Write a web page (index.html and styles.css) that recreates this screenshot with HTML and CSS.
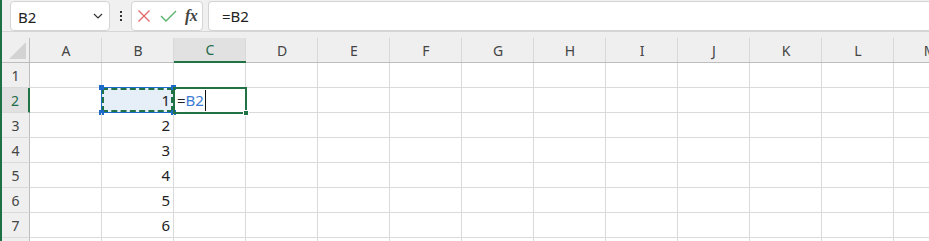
FILE: index.html
```html
<!DOCTYPE html>
<html lang="ja">
<head>
    <meta charset="UTF-8">
    <title>Book1 - Excel</title>
    <link rel="stylesheet" href="styles.css">
</head>
<body>
    <div class="app">
        <div class="toolbar">
            <div class="name-box">
                <span>B2</span>
                <svg class="chevron" width="10" height="6" viewBox="0 0 10 6"><path d="M1 1l4 4 4-4" fill="none" stroke="#333" stroke-width="1.2"/></svg>
            </div>
            <div class="dots"><i></i><i></i><i></i></div>
            <div class="fx-box">
                <svg width="14" height="14" viewBox="0 0 14 14"><path d="M1.5 1.5l11 11M12.5 1.5l-11 11" stroke="#e36b6b" stroke-width="1.4" fill="none"/></svg>
                <svg width="17" height="12" viewBox="0 0 17 12"><path d="M1 6l5 5 10-10" stroke="#5bb36a" stroke-width="1.4" fill="none"/></svg>
                <span class="fx">fx</span>
            </div>
            <div class="formula">=B2</div>
        </div>

        <div class="strip"></div>

        <div class="sheet">
            <div class="corner"><span class="tri"></span></div>
            <div class="col-head">A</div>
            <div class="col-head">B</div>
            <div class="col-head active">C</div>
            <div class="col-head">D</div>
            <div class="col-head">E</div>
            <div class="col-head">F</div>
            <div class="col-head">G</div>
            <div class="col-head">H</div>
            <div class="col-head">I</div>
            <div class="col-head">J</div>
            <div class="col-head">K</div>
            <div class="col-head">L</div>
            <div class="col-head">M</div>

            <!-- row 1 -->
            <div class="row-head">1</div>
            <div class="cell"></div><div class="cell"></div><div class="cell"></div><div class="cell"></div><div class="cell"></div><div class="cell"></div><div class="cell"></div><div class="cell"></div><div class="cell"></div><div class="cell"></div><div class="cell"></div><div class="cell"></div><div class="cell"></div>

            <!-- row 2 -->
            <div class="row-head active">2</div>
            <div class="cell"></div>
            <div class="cell num copied">1
                <span class="ants"></span>
                <span class="knob tl"></span><span class="knob tr"></span><span class="knob bl"></span><span class="knob br"></span>
            </div>
            <div class="cell editing"><span class="eq">=</span><span class="ref">B2</span><span class="caret"></span><span class="fill-handle"></span></div>
            <div class="cell"></div><div class="cell"></div><div class="cell"></div><div class="cell"></div><div class="cell"></div><div class="cell"></div><div class="cell"></div><div class="cell"></div><div class="cell"></div><div class="cell"></div>

            <!-- row 3 -->
            <div class="row-head">3</div>
            <div class="cell"></div><div class="cell num">2</div><div class="cell"></div><div class="cell"></div><div class="cell"></div><div class="cell"></div><div class="cell"></div><div class="cell"></div><div class="cell"></div><div class="cell"></div><div class="cell"></div><div class="cell"></div><div class="cell"></div>

            <!-- row 4 -->
            <div class="row-head">4</div>
            <div class="cell"></div><div class="cell num">3</div><div class="cell"></div><div class="cell"></div><div class="cell"></div><div class="cell"></div><div class="cell"></div><div class="cell"></div><div class="cell"></div><div class="cell"></div><div class="cell"></div><div class="cell"></div><div class="cell"></div>

            <!-- row 5 -->
            <div class="row-head">5</div>
            <div class="cell"></div><div class="cell num">4</div><div class="cell"></div><div class="cell"></div><div class="cell"></div><div class="cell"></div><div class="cell"></div><div class="cell"></div><div class="cell"></div><div class="cell"></div><div class="cell"></div><div class="cell"></div><div class="cell"></div>

            <!-- row 6 -->
            <div class="row-head">6</div>
            <div class="cell"></div><div class="cell num">5</div><div class="cell"></div><div class="cell"></div><div class="cell"></div><div class="cell"></div><div class="cell"></div><div class="cell"></div><div class="cell"></div><div class="cell"></div><div class="cell"></div><div class="cell"></div><div class="cell"></div>

            <!-- row 7 -->
            <div class="row-head">7</div>
            <div class="cell"></div><div class="cell num">6</div><div class="cell"></div><div class="cell"></div><div class="cell"></div><div class="cell"></div><div class="cell"></div><div class="cell"></div><div class="cell"></div><div class="cell"></div><div class="cell"></div><div class="cell"></div><div class="cell"></div>

            <!-- row 8 -->
            <div class="row-head"></div>
            <div class="cell"></div><div class="cell"></div><div class="cell"></div><div class="cell"></div><div class="cell"></div><div class="cell"></div><div class="cell"></div><div class="cell"></div><div class="cell"></div><div class="cell"></div><div class="cell"></div><div class="cell"></div><div class="cell"></div>
        </div>
    </div>
</body>
</html>
```

FILE: styles.css
```css
/* Reset */
* {
  box-sizing: border-box;
  margin: 0;
  padding: 0;
}

body {
  font-family: "Noto Sans", "Liberation Sans", sans-serif;
  background-color: #f0f0f0;
  color: #222;
  overflow: hidden;
}

.app {
  width: 929px;
  height: 241px;
  border-left: 2px solid #1e7145;
  overflow: hidden;
}

/* Formula bar */
.toolbar {
  height: 32px;
  display: flex;
  align-items: stretch;
  padding: 1px 0 0 8px;
  border-bottom: 1px solid #d6d6d6;
}

.name-box {
  width: 100px;
  height: 30px;
  background-color: #fff;
  border: 1px solid #d4d4d4;
  border-radius: 4px;
  display: flex;
  align-items: center;
  justify-content: space-between;
  padding: 0 6px 0 7px;
  font-size: 15px;
  color: #222;
}

.name-box span {
  margin-top: 1px;
}

.dots {
  width: 21px;
  display: flex;
  flex-direction: column;
  align-items: center;
  justify-content: center;
  gap: 2px;
}

.dots i {
  width: 2px;
  height: 2px;
  background-color: #333;
}

.fx-box {
  width: 72px;
  height: 30px;
  background-color: #fff;
  border: 1px solid #d4d4d4;
  border-radius: 4px;
  display: flex;
  align-items: center;
  padding: 0 0 0 5px;
  gap: 8px;
}

.fx-box svg:first-child {
  margin-right: 1px;
}

.fx {
  font-family: "Liberation Serif", serif;
  font-style: italic;
  font-weight: bold;
  font-size: 16px;
  color: #444;
  letter-spacing: -0.5px;
}

.formula {
  flex: 1;
  height: 30px;
  margin-left: 5px;
  background-color: #fff;
  border: 1px solid #d4d4d4;
  border-right: none;
  border-radius: 4px 0 0 4px;
  padding: 4px 0 0 13px;
  font-size: 15px;
  color: #222;
}

.strip {
  height: 6px;
  background-color: #efefef;
}

/* Worksheet grid */
.sheet {
  display: grid;
  grid-template-columns: 28px repeat(13, 72px);
  grid-template-rows: 25px;
  grid-auto-rows: 25px;
  background-color: #fff;
}

.corner,
.col-head {
  background-color: #efefef;
  border-bottom: 1px solid #bdbdbd;
}

.corner {
  border-right: 1px solid #bdbdbd;
  display: flex;
  align-items: flex-end;
  justify-content: flex-end;
  padding: 0 3px 3px 0;
}

.tri {
  width: 0;
  height: 0;
  border-left: 17px solid transparent;
  border-bottom: 17px solid #d3d3d3;
}

.col-head {
  display: flex;
  align-items: center;
  justify-content: center;
  font-size: 14px;
  color: #444;
  background-image: linear-gradient(#d8d8d8, #d8d8d8);
  background-size: 1px 100%;
  background-position: right top;
  background-repeat: no-repeat;
}

.col-head.active {
  background-color: #e1e1e1;
  border-bottom: 2px solid #217346;
  color: #1f6b4a;
}

.row-head {
  background-color: #efefef;
  border-right: 1px solid #bdbdbd;
  border-bottom: 1px solid #dadada;
  display: flex;
  align-items: center;
  justify-content: center;
  font-size: 14px;
  color: #444;
}

.row-head.active {
  background-color: #e1e1e1;
  border-right: 2px solid #217346;
  color: #1f6b4a;
}

.cell {
  position: relative;
  border-right: 1px solid #dadada;
  border-bottom: 1px solid #dadada;
  font-size: 15px;
  line-height: 24px;
  padding: 0 3px;
  color: #222;
}

.num {
  text-align: right;
}

/* copied cell with marching ants */
.copied {
  background-color: #e6eef8;
}

.ants {
  position: absolute;
  left: -1px;
  top: -1px;
  right: -1px;
  bottom: -1px;
  border: 1px solid #1b6ac9;
  outline: 2px dashed #217346;
  outline-offset: -3px;
}

.knob {
  position: absolute;
  width: 5px;
  height: 5px;
  background-color: #1b6ac9;
}

.knob.tl { left: -3px; top: -3px; }
.knob.tr { right: -3px; top: -3px; }
.knob.bl { left: -3px; bottom: -3px; }
.knob.br { right: -3px; bottom: -3px; }

/* cell being edited */
.editing {
  border: 2px solid #217346;
  margin: -1px 0 0 -1px;
  width: 74px;
  height: 27px;
  padding: 0 2px;
  line-height: 23px;
  z-index: 1;
}

.eq {
  color: #222;
}

.ref {
  color: #3c7cd4;
}

.caret {
  display: inline-block;
  width: 1px;
  height: 21px;
  margin-left: 1px;
  vertical-align: -5px;
  background-color: #111;
}

.fill-handle {
  position: absolute;
  right: -4px;
  bottom: -4px;
  width: 6px;
  height: 6px;
  background-color: #217346;
  border: 1px solid #fff;
}
```
